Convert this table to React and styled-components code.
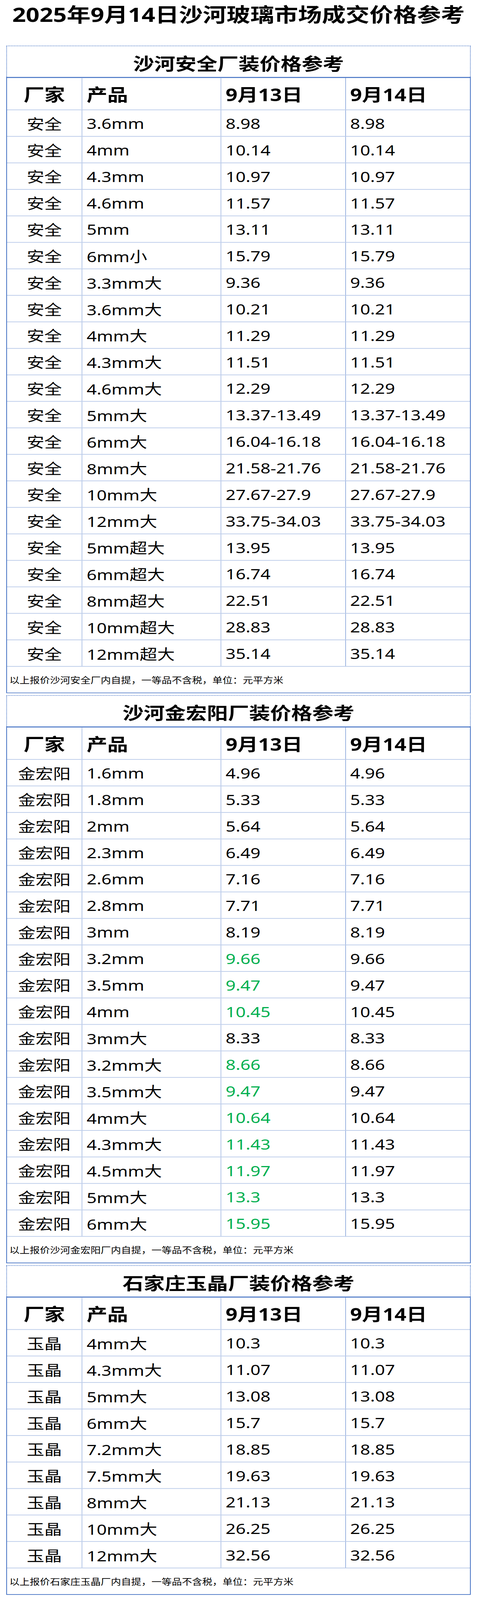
import { useEffect, useState } from "react";
import styled, { createGlobalStyle } from "styled-components";

// full height of the original long image
const PAGE_HEIGHT = 4951;

const GlobalStyle = createGlobalStyle`
  html, body {
    margin: 0;
    padding: 0;
    background: #fff;
  }
  body {
    font-family: "Noto Sans", "Noto Sans CJK SC", sans-serif;
    color: #000;
  }
`;

const sections = [
  {
    title: "沙河安全厂装价格参考",
    maker: "安全",
    note: "以上报价沙河安全厂内自提，一等品不含税，单位：元平方米",
    rows: [
      ["3.6mm", "8.98", "8.98"],
      ["4mm", "10.14", "10.14"],
      ["4.3mm", "10.97", "10.97"],
      ["4.6mm", "11.57", "11.57"],
      ["5mm", "13.11", "13.11"],
      ["6mm小", "15.79", "15.79"],
      ["3.3mm大", "9.36", "9.36"],
      ["3.6mm大", "10.21", "10.21"],
      ["4mm大", "11.29", "11.29"],
      ["4.3mm大", "11.51", "11.51"],
      ["4.6mm大", "12.29", "12.29"],
      ["5mm大", "13.37-13.49", "13.37-13.49"],
      ["6mm大", "16.04-16.18", "16.04-16.18"],
      ["8mm大", "21.58-21.76", "21.58-21.76"],
      ["10mm大", "27.67-27.9", "27.67-27.9"],
      ["12mm大", "33.75-34.03", "33.75-34.03"],
      ["5mm超大", "13.95", "13.95"],
      ["6mm超大", "16.74", "16.74"],
      ["8mm超大", "22.51", "22.51"],
      ["10mm超大", "28.83", "28.83"],
      ["12mm超大", "35.14", "35.14"],
    ],
  },
  {
    title: "沙河金宏阳厂装价格参考",
    maker: "金宏阳",
    note: "以上报价沙河金宏阳厂内自提，一等品不含税，单位：元平方米",
    rows: [
      ["1.6mm", "4.96", "4.96"],
      ["1.8mm", "5.33", "5.33"],
      ["2mm", "5.64", "5.64"],
      ["2.3mm", "6.49", "6.49"],
      ["2.6mm", "7.16", "7.16"],
      ["2.8mm", "7.71", "7.71"],
      ["3mm", "8.19", "8.19"],
      ["3.2mm", "9.66", "9.66", true],
      ["3.5mm", "9.47", "9.47", true],
      ["4mm", "10.45", "10.45", true],
      ["3mm大", "8.33", "8.33"],
      ["3.2mm大", "8.66", "8.66", true],
      ["3.5mm大", "9.47", "9.47", true],
      ["4mm大", "10.64", "10.64", true],
      ["4.3mm大", "11.43", "11.43", true],
      ["4.5mm大", "11.97", "11.97", true],
      ["5mm大", "13.3", "13.3", true],
      ["6mm大", "15.95", "15.95", true],
    ],
  },
  {
    title: "石家庄玉晶厂装价格参考",
    maker: "玉晶",
    note: "以上报价石家庄玉晶厂内自提，一等品不含税，单位：元平方米",
    rows: [
      ["4mm大", "10.3", "10.3"],
      ["4.3mm大", "11.07", "11.07"],
      ["5mm大", "13.08", "13.08"],
      ["6mm大", "15.7", "15.7"],
      ["7.2mm大", "18.85", "18.85"],
      ["7.5mm大", "19.63", "19.63"],
      ["8mm大", "21.13", "21.13"],
      ["10mm大", "26.25", "26.25"],
      ["12mm大", "32.56", "32.56"],
    ],
  },
];

function fitScale() {
  // the browser may give us a shorter window than the image; squeeze to fit
  return Math.min(1, window.innerHeight / PAGE_HEIGHT);
}

export default function App() {
  const [scale, setScale] = useState(fitScale);

  useEffect(() => {
    const onResize = () => setScale(fitScale());
    window.addEventListener("resize", onResize);
    return () => window.removeEventListener("resize", onResize);
  }, []);

  return (
    <Frame style={{ height: Math.floor(PAGE_HEIGHT * scale) }}>
      <GlobalStyle />
      <Page style={{ transform: `scaleY(${scale})` }}>
        <Title>2025年9月14日沙河玻璃市场成交价格参考</Title>
        {sections.map((s) => (
          <Section key={s.title}>
            <Heading>{s.title}</Heading>
            <Table>
              <HeadRow>
                <Cell center>厂家</Cell>
                <Cell>产品</Cell>
                <Cell dark>9月13日</Cell>
                <Cell last>9月14日</Cell>
              </HeadRow>
              {s.rows.map(([size, prev, cur, up]) => (
                <Row key={size}>
                  <Cell center>{s.maker}</Cell>
                  <Cell>{size}</Cell>
                  <Cell dark green={up}>
                    {prev}
                  </Cell>
                  <Cell last>{cur}</Cell>
                </Row>
              ))}
              <Note>{s.note}</Note>
            </Table>
          </Section>
        ))}
      </Page>
    </Frame>
  );
}

const Frame = styled.div`
  overflow: hidden;
`;

const Page = styled.div`
  box-sizing: border-box;
  height: ${PAGE_HEIGHT}px;
  padding: 0 16px 16px;
  transform-origin: top left;
`;

const Title = styled.h1`
  margin: 0 0 51px;
  height: 90px;
  line-height: 90px;
  font-size: 61px;
  font-weight: 700;
  text-align: center;
  white-space: nowrap;
`;

const Section = styled.section`
  margin-bottom: 6px;

  &:last-child {
    margin-bottom: 0;
  }
`;

const Heading = styled.h2`
  box-sizing: border-box;
  height: 97px;
  margin: 0;
  padding-top: 6px;
  border: 2px dotted #4472c4;
  border-bottom: none;
  display: flex;
  align-items: center;
  justify-content: center;
  font-size: 54px;
  font-weight: 700;
`;

const Table = styled.div`
  border: 2px solid #4472c4;
  border-top-width: 3px;
`;

const Row = styled.div`
  display: grid;
  grid-template-columns: 193px 356px 319px 1fr;
  height: 82px;
  box-sizing: border-box;
  border-bottom: 2px solid #b4c6e7;
  font-size: 45px;
  font-weight: 400;
`;

const HeadRow = styled(Row)`
  height: 100px;
  font-size: 53px;
  font-weight: 700;
`;

const Cell = styled.div`
  display: flex;
  align-items: center;
  justify-content: ${(p) => (p.center ? "center" : "flex-start")};
  padding-left: ${(p) => (p.center ? "0" : "11px")};
  border-right: ${(p) =>
    p.last ? "none" : p.dark ? "1px solid #4472c4" : "2px solid #b4c6e7"};
  color: ${(p) => (p.green ? "#00b050" : "#000")};
  white-space: nowrap;
  overflow: hidden;
`;

const Note = styled.div`
  height: 80px;
  display: flex;
  align-items: center;
  padding-left: 6px;
  font-size: 26px;
  white-space: nowrap;
`;
